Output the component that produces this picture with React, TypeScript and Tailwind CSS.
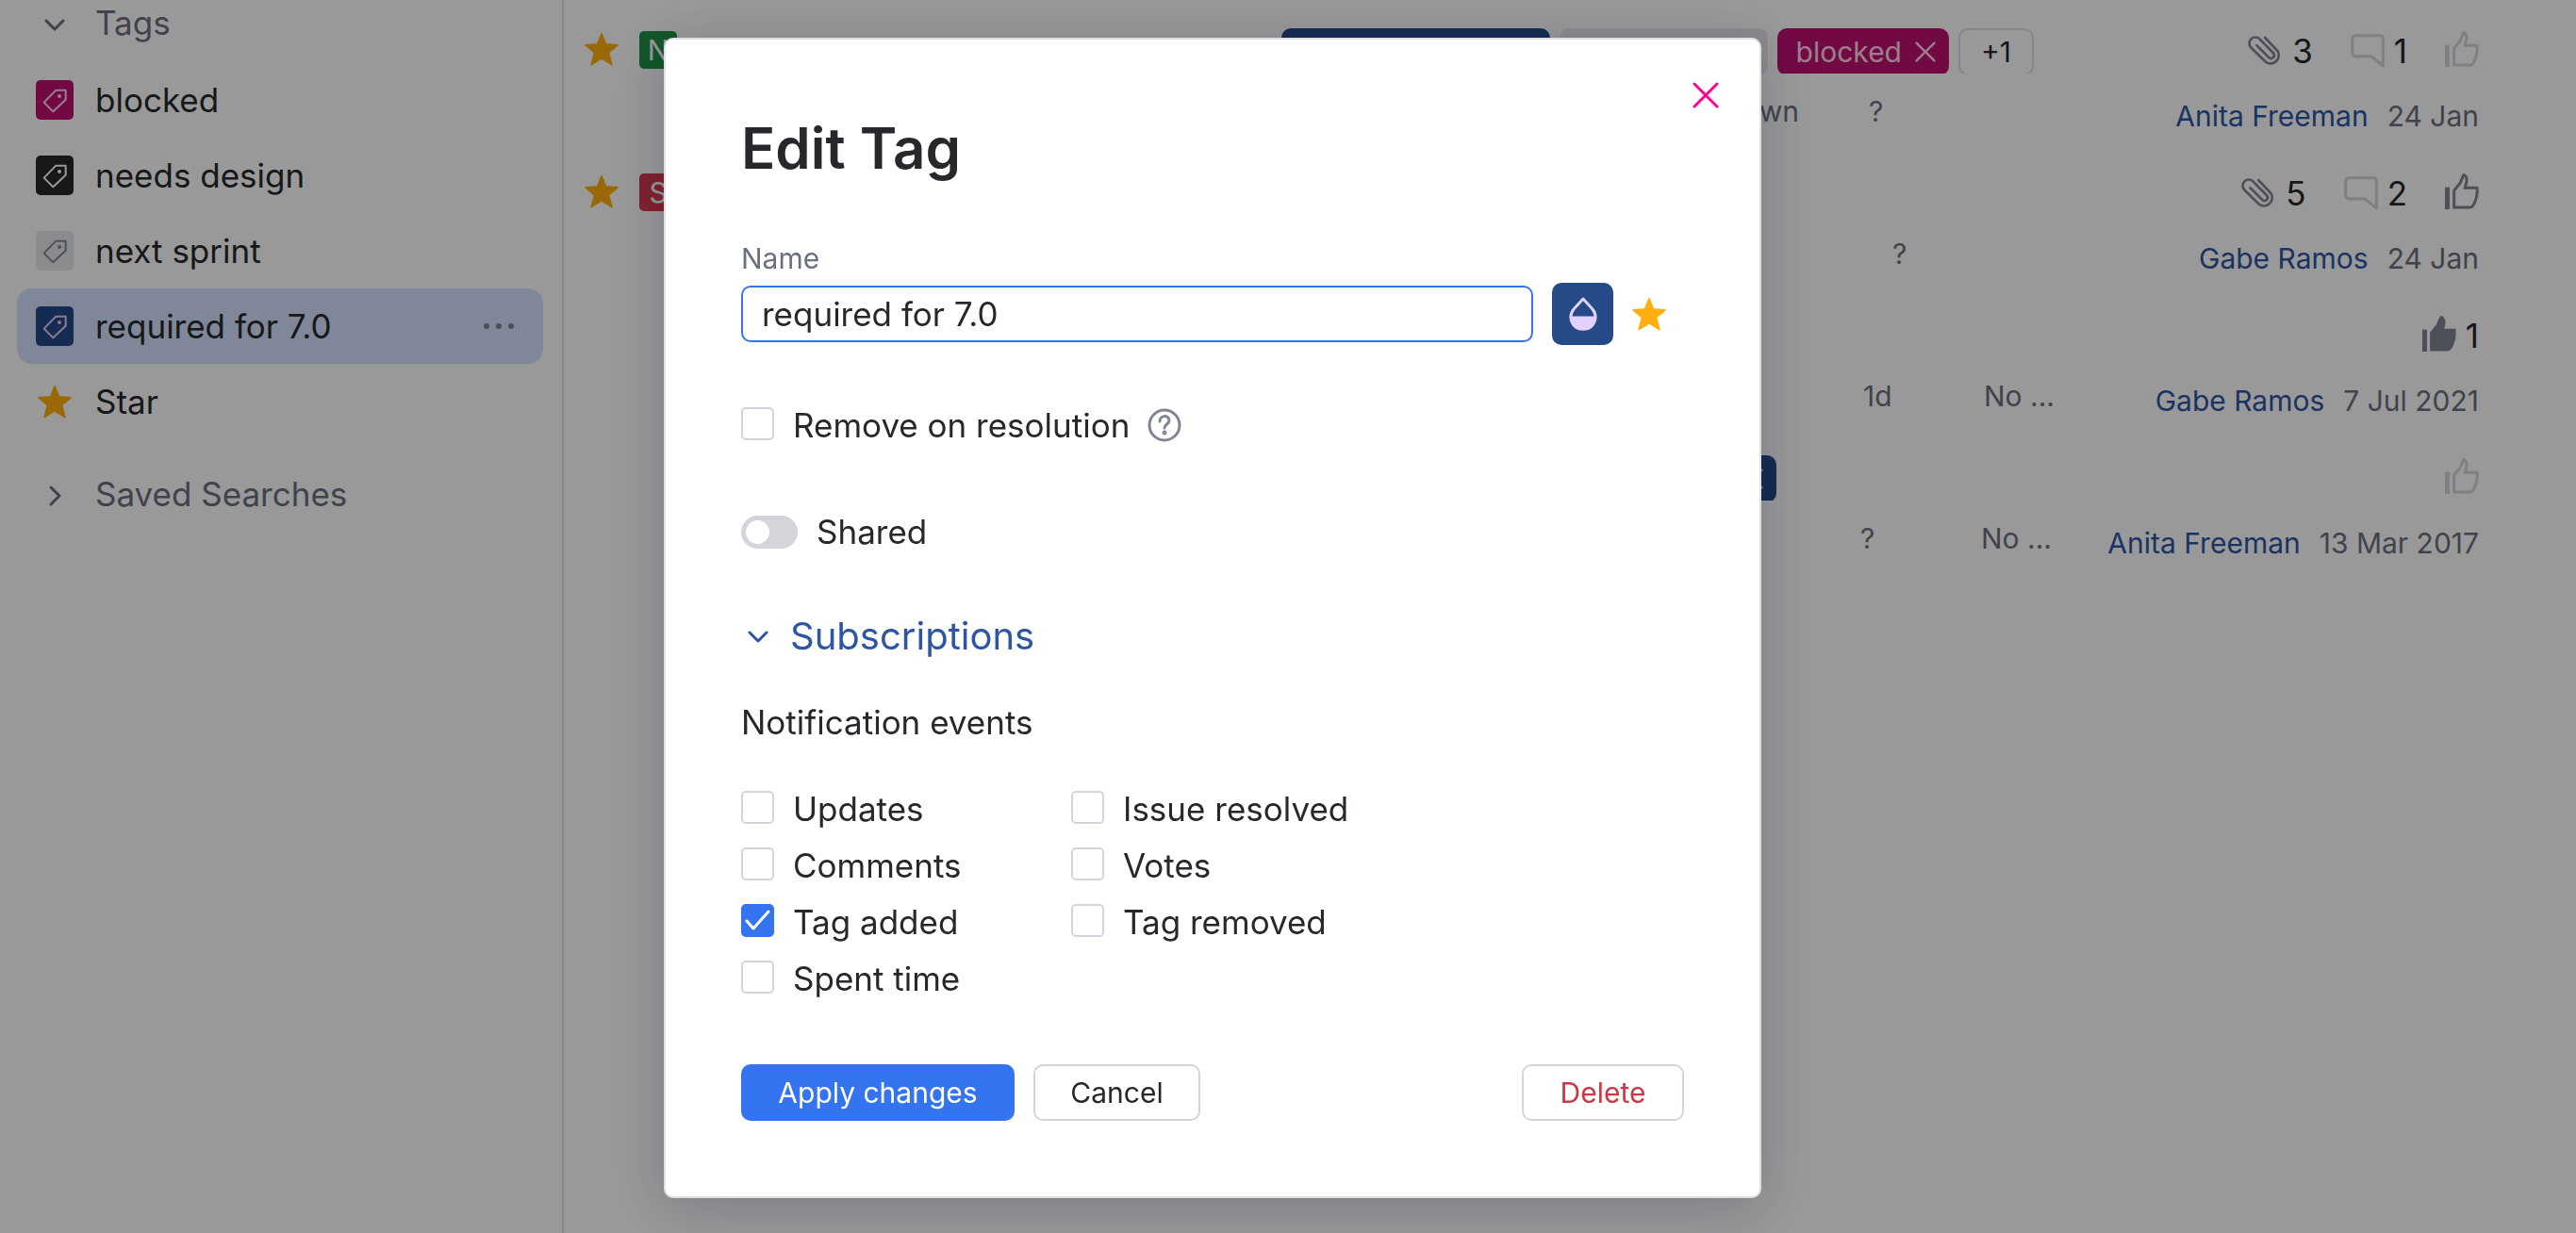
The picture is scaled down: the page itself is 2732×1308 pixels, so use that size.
import { useState } from "react";
import type { ReactNode } from "react";
import clsx from "clsx";

const StarIcon = () => (
  <svg
    viewBox="0 0 106 104"
    className="size-9 shrink-0 fill-[#ffaf0f] stroke-[#ffaf0f]"
    strokeWidth="5"
    strokeLinejoin="round"
  >
    <path d="M53 4 66 37 103 40 75 63 85 101 53 81 21 101 31 63 3 40 40 37Z" />
  </svg>
);

const TagIcon = () => (
  <svg viewBox="0 0 120 126" className="h-[42px] w-10" fill="none">
    <path
      d="M26 71 64 32H95V62L55 100Z"
      stroke="currentColor"
      strokeWidth="6"
      strokeLinejoin="round"
    />
    <circle cx="75" cy="51" r="6" fill="currentColor" />
  </svg>
);

const Chevron = ({ open }: { open: boolean }) => (
  <svg
    viewBox="0 0 36 36"
    className="size-9 shrink-0"
    fill="none"
    stroke="currentColor"
    strokeWidth="3"
    strokeLinecap="round"
    strokeLinejoin="round"
  >
    <path d={open ? "M9 14 18 23 27 14" : "M14 9 23 18 14 27"} />
  </svg>
);

const CloseIcon = ({ className }: { className: string }) => (
  <svg
    viewBox="0 0 28 28"
    className={className}
    fill="none"
    stroke="currentColor"
    strokeWidth="3"
    strokeLinecap="round"
  >
    <path d="M2 2 26 26M26 2 2 26" />
  </svg>
);

const PaperclipIcon = () => (
  <svg
    viewBox="0 0 107 97"
    className="w-9 text-[#818594]"
    fill="none"
    stroke="currentColor"
    strokeWidth="8"
    strokeLinecap="round"
  >
    <path d="M54 6 93 47A26 26 0 0 1 57 83L10 37A19 19 0 0 1 37 10L81 55A10 10 0 0 1 67 69L28 30" />
  </svg>
);

const CommentIcon = () => (
  <svg
    viewBox="0 0 107 107"
    className="size-9 text-[#d5d6dd]"
    fill="none"
    stroke="currentColor"
    strokeWidth="9"
    strokeLinejoin="round"
  >
    <path d="M17 5H92Q102 5 102 15V101L66 71H17Q5 71 5 59V17Q5 5 17 5Z" />
  </svg>
);

const ThumbIcon = ({ filled }: { filled?: boolean }) => (
  <svg viewBox="0 0 108 114" className="h-[38px] w-9" stroke="currentColor">
    <path d="M0 44H15V114H0Z" fill="currentColor" stroke="none" />
    <path
      d="M29 108V54L46 34C53 25 53 14 60 5C67 8 70 15 69 24L64 46H102Q105 70 95 92Q88 108 80 108Z"
      fill={filled ? "currentColor" : "none"}
      strokeWidth="9"
    />
  </svg>
);

const DropIcon = () => (
  <svg viewBox="0 0 92 109" className="h-9 w-8 text-[#e1d1fc]">
    <path
      d="M46 6 17 38C-5 64 10 104 46 104C82 104 97 64 75 38Z"
      fill="none"
      stroke="currentColor"
      strokeWidth="9"
      strokeLinejoin="round"
    />
    <path d="M5 62H87C87 90 70 104 46 104S5 90 5 62Z" fill="currentColor" />
  </svg>
);

const tags = [
  { name: "blocked", color: "bg-[#bf0f71] text-[#ffd6ea]" },
  { name: "needs design", color: "bg-[#27282c] text-white" },
  { name: "next sprint", color: "bg-[#e6e8eb] text-[#818594]" },
  { name: "required for 7.0", color: "bg-[#264988] text-[#e1d1fc]" },
];

const SideBar = () => (
  <aside className="w-[598px] shrink-0 border-r-2 border-[#dfe0e4] pr-5 pl-[18px]">
    <button className="mb-[18px] flex h-12 w-full items-center gap-[25px] pl-[22px] text-[#6c707e]">
      <span className="mt-1">
        <Chevron open />
      </span>
      Tags
    </button>
    <ul>
      {tags.map((tag) => {
        const selected = tag.name === "required for 7.0";
        return (
          <li
            key={tag.name}
            className={clsx(
              "flex h-20 items-center gap-[23px] rounded-2xl pr-[30px] pl-5",
              selected && "bg-[#d4e2ff]"
            )}
          >
            <span className={clsx("rounded-[5px]", tag.color)}>
              <TagIcon />
            </span>
            <a href="#">{tag.name}</a>
            {selected ? (
              <button
                aria-label="More actions"
                className="ml-auto text-[#818594]"
              >
                <svg viewBox="0 0 34 8" className="w-[34px]" fill="currentColor">
                  <circle cx="4" cy="4" r="3" />
                  <circle cx="17" cy="4" r="3" />
                  <circle cx="30" cy="4" r="3" />
                </svg>
              </button>
            ) : null}
          </li>
        );
      })}
      <li className="flex h-20 items-center gap-[25px] pl-[22px]">
        <StarIcon />
        <a href="#">Star</a>
      </li>
    </ul>
    <button className="mt-[34px] flex h-12 w-full items-center gap-[25px] pl-[22px] text-[#6c707e]">
      <span className="mt-1">
        <Chevron open={false} />
      </span>
      Saved Searches
    </button>
  </aside>
);

const Pill = ({ name, color }: { name: string; color: string }) => (
  <span
    className={clsx(
      "flex h-[50px] items-center gap-[14px] rounded-[10px] pr-[14px] pl-5",
      color
    )}
  >
    {name}
    <button aria-label={"Remove tag " + name}>
      <CloseIcon className="size-[22px]" />
    </button>
  </span>
);

type Issue = {
  id: number;
  badge?: { letter: string; color: string };
  pills?: ReactNode;
  files?: number;
  comments?: number;
  votes?: number;
  thumb: string;
  fields: { text: string; width: string }[];
  author: string;
  date: string;
};

const issues: Issue[] = [
  {
    id: 1,
    badge: { letter: "N", color: "bg-[#219044]" },
    pills: (
      <div className="mr-5 ml-auto flex h-12 gap-[10px] overflow-hidden text-[30px]">
        <Pill name="required for 7.0" color="bg-[#264988] text-[#e1d1fc]" />
        <Pill name="next sprint" color="bg-[#e6e8eb] text-[#6c707e]" />
        <Pill name="blocked" color="bg-[#bf0f71] text-[#ffd6ea]" />
        <button className="h-[50px] w-20 rounded-[10px] border-2 border-[#dfe0e4]">
          +1
        </button>
      </div>
    ),
    files: 3,
    comments: 1,
    thumb: "text-[#d5d6dd]",
    fields: [
      { text: "Unknown", width: "w-[208px]" },
      { text: "?", width: "w-[195px]" },
    ],
    author: "Anita Freeman",
    date: "24 Jan",
  },
  {
    id: 2,
    badge: { letter: "S", color: "bg-[#d63a4c]" },
    files: 5,
    comments: 2,
    thumb: "text-[#818594]",
    fields: [{ text: "?", width: "w-[170px]" }],
    author: "Gabe Ramos",
    date: "24 Jan",
  },
  {
    id: 3,
    votes: 1,
    thumb: "text-[#818594]",
    fields: [
      { text: "1d", width: "w-[128px]" },
      { text: "No ...", width: "w-[73px]" },
    ],
    author: "Gabe Ramos",
    date: "7 Jul 2021",
  },
  {
    id: 4,
    pills: (
      <div className="mr-[293px] ml-auto flex h-12 overflow-hidden text-[30px]">
        <Pill name="required for 7.0" color="bg-[#264988] text-[#e1d1fc]" />
      </div>
    ),
    thumb: "text-[#d5d6dd]",
    fields: [
      { text: "?", width: "w-[128px]" },
      { text: "No ...", width: "w-[76px]" },
    ],
    author: "Anita Freeman",
    date: "13 Mar 2017",
  },
];

const IssueRow = ({ issue }: { issue: Issue }) => (
  <li className="mb-[33px]">
    <div className="flex h-12 items-center">
      {issue.badge ? (
        <>
          <span className="mb-1">
            <StarIcon />
          </span>
          <span
            className={clsx(
              "mb-0.5 ml-[22px] flex size-10 items-center justify-center rounded-[5px] text-[30px] text-white",
              issue.badge.color
            )}
          >
            {issue.badge.letter}
          </span>
        </>
      ) : null}
      <div className="flex flex-1">{issue.pills}</div>
      <div className="flex w-[452px] items-center justify-end gap-10">
        {issue.files ? (
          <span className="flex items-center gap-[11px]">
            <PaperclipIcon />
            {issue.files}
          </span>
        ) : null}
        {issue.comments ? (
          <span className="flex items-center gap-[10px]">
            <CommentIcon />
            {issue.comments}
          </span>
        ) : null}
        <button
          aria-label="Vote"
          className="flex items-center gap-[10px]"
        >
          <span className={clsx("mb-1", issue.thumb)}>
            <ThumbIcon filled={Boolean(issue.votes)} />
          </span>
          {issue.votes}
        </button>
      </div>
    </div>
    <div className="mt-5 flex text-[30px] whitespace-nowrap text-[#6c707e]">
      <div className="flex flex-1 justify-end leading-10">
        {issue.fields.map((field) => (
          <span key={field.text} className={field.width}>
            {field.text}
          </span>
        ))}
      </div>
      <div className="flex w-[452px] justify-end gap-5 leading-[50px]">
        <a href="#" className="text-[#2e55a3]">
          {issue.author}
        </a>
        <span>{issue.date}</span>
      </div>
    </div>
  </li>
);

type CheckProps = {
  label: string;
  checked: boolean;
  onChange: () => void;
};

const Checkbox = ({ label, checked, onChange }: CheckProps) => (
  <label className="flex items-center gap-5">
    <span className="mb-1 grid">
      <input
        type="checkbox"
        checked={checked}
        onChange={onChange}
        className="col-start-1 row-start-1 size-[35px] appearance-none rounded-[5px] border-2 border-[#d3d5db] bg-white checked:border-[#3574f0] checked:bg-[#3574f0]"
      />
      {checked ? (
        <svg
          viewBox="0 0 35 35"
          className="pointer-events-none col-start-1 row-start-1 size-[35px] text-white"
          fill="none"
          stroke="currentColor"
          strokeWidth="3"
          strokeLinecap="round"
          strokeLinejoin="round"
        >
          <path d="M6 18 13 26 29 8" />
        </svg>
      ) : null}
    </span>
    {label}
  </label>
);

const events = [
  "Updates",
  "Issue resolved",
  "Comments",
  "Votes",
  "Tag added",
  "Tag removed",
  "Spent time",
];

const EditTagDialog = () => {
  const [name, setName] = useState<string>("required for 7.0");
  const [removeOnResolution, setRemoveOnResolution] = useState<boolean>(false);
  const [shared, setShared] = useState<boolean>(false);
  const [subscribed, setSubscribed] = useState<string[]>(["Tag added"]);

  const toggleEvent = (event: string) =>
    setSubscribed((prev) =>
      prev.includes(event) ? prev.filter((e) => e !== event) : [...prev, event]
    );

  return (
    <form
      role="dialog"
      aria-labelledby="edit-tag-title"
      className="relative w-full max-w-[1164px] rounded-[10px] border-2 border-[#dfe0e4] bg-white p-20 shadow-[0_10px_60px_rgba(0,20,50,0.22)]"
    >
      <button
        type="button"
        aria-label="Close"
        className="absolute top-[45px] right-[43px] text-[#ff0090]"
      >
        <CloseIcon className="size-7" />
      </button>
      <h1
        id="edit-tag-title"
        className="text-[60px] leading-[70px] font-semibold"
      >
        Edit Tag
      </h1>

      <label
        htmlFor="tag-name"
        className="mt-[62px] block text-[30px] leading-10 text-[#6c707e]"
      >
        Name
      </label>
      <div className="mt-[6px] flex items-center gap-5">
        <input
          id="tag-name"
          value={name}
          onChange={(e) => setName(e.target.value)}
          className="h-[60px] w-[840px] rounded-[10px] border-2 border-[#3574f0] px-5 outline-none"
        />
        <button
          type="button"
          aria-label="Tag color"
          className="flex h-[66px] w-[65px] items-center justify-center rounded-[10px] bg-[#264988]"
        >
          <DropIcon />
        </button>
        <button type="button" aria-label="Add to favorites">
          <StarIcon />
        </button>
      </div>

      <div className="mt-[65px] flex h-10 items-center gap-[19px]">
        <Checkbox
          label="Remove on resolution"
          checked={removeOnResolution}
          onChange={() => setRemoveOnResolution((prev) => !prev)}
        />
        <button type="button" aria-label="Help" className="text-[#818594]">
          <svg
            viewBox="0 0 36 36"
            className="size-9"
            fill="none"
            stroke="currentColor"
            strokeWidth="3"
            strokeLinecap="round"
          >
            <circle cx="18" cy="18" r="16" />
            <path d="M13 14C13 7 23 7 23 13C23 17 18 17 18 21" />
            <circle cx="18" cy="26" r="1" />
          </svg>
        </button>
      </div>

      <label className="mt-[73px] flex h-10 items-center gap-5">
        <input
          type="checkbox"
          role="switch"
          checked={shared}
          onChange={() => setShared((prev) => !prev)}
          className="flex h-[35px] w-[60px] appearance-none items-center rounded-full bg-[#d3d5db] px-[5px] before:size-[25px] before:rounded-full before:bg-white checked:justify-end checked:bg-[#3574f0]"
        />
        Shared
      </label>

      <button
        type="button"
        aria-expanded="true"
        className="mt-[66px] flex items-center gap-4 text-[40px] leading-[50px] text-[#2e55a3]"
      >
        <Chevron open />
        Subscriptions
      </button>

      <fieldset className="mt-[46px]">
        <legend className="leading-10">Notification events</legend>
        <div className="mt-[42px] grid w-[700px] grid-cols-2">
          {events.map((event) => (
            <div key={event} className="flex h-[60px] items-center">
              <Checkbox
                label={event}
                checked={subscribed.includes(event)}
                onChange={() => toggleEvent(event)}
              />
            </div>
          ))}
        </div>
      </fieldset>

      <div className="mt-[61px] flex gap-5 text-[30px]">
        <button
          type="button"
          className="h-[60px] w-[290px] rounded-[10px] bg-[#3574f0] text-white"
        >
          Apply changes
        </button>
        <button
          type="button"
          className="h-[60px] w-[177px] rounded-[10px] border-2 border-[#d3d5db]"
        >
          Cancel
        </button>
        <button
          type="button"
          className="ml-auto h-[60px] w-[172px] rounded-[10px] border-2 border-[#d3d5db] text-[#cc3645]"
        >
          Delete
        </button>
      </div>
    </form>
  );
};

const App = () => {
  return (
    <div className="bg-white font-['Inter',sans-serif] text-[35px] text-[#27282c]">
      <div className="flex min-h-screen">
        <SideBar />
        <main className="min-w-0 flex-1 pt-[30px] pr-[103px] pl-[22px]">
          <ul>
            {issues.map((issue) => (
              <IssueRow key={issue.id} issue={issue} />
            ))}
          </ul>
        </main>
      </div>
      {/* Backdrop with the dialog on top of the issue list */}
      <div className="fixed inset-0 flex items-start justify-center bg-black/40 pt-10 pr-40">
        <EditTagDialog />
      </div>
    </div>
  );
};

export default App;
